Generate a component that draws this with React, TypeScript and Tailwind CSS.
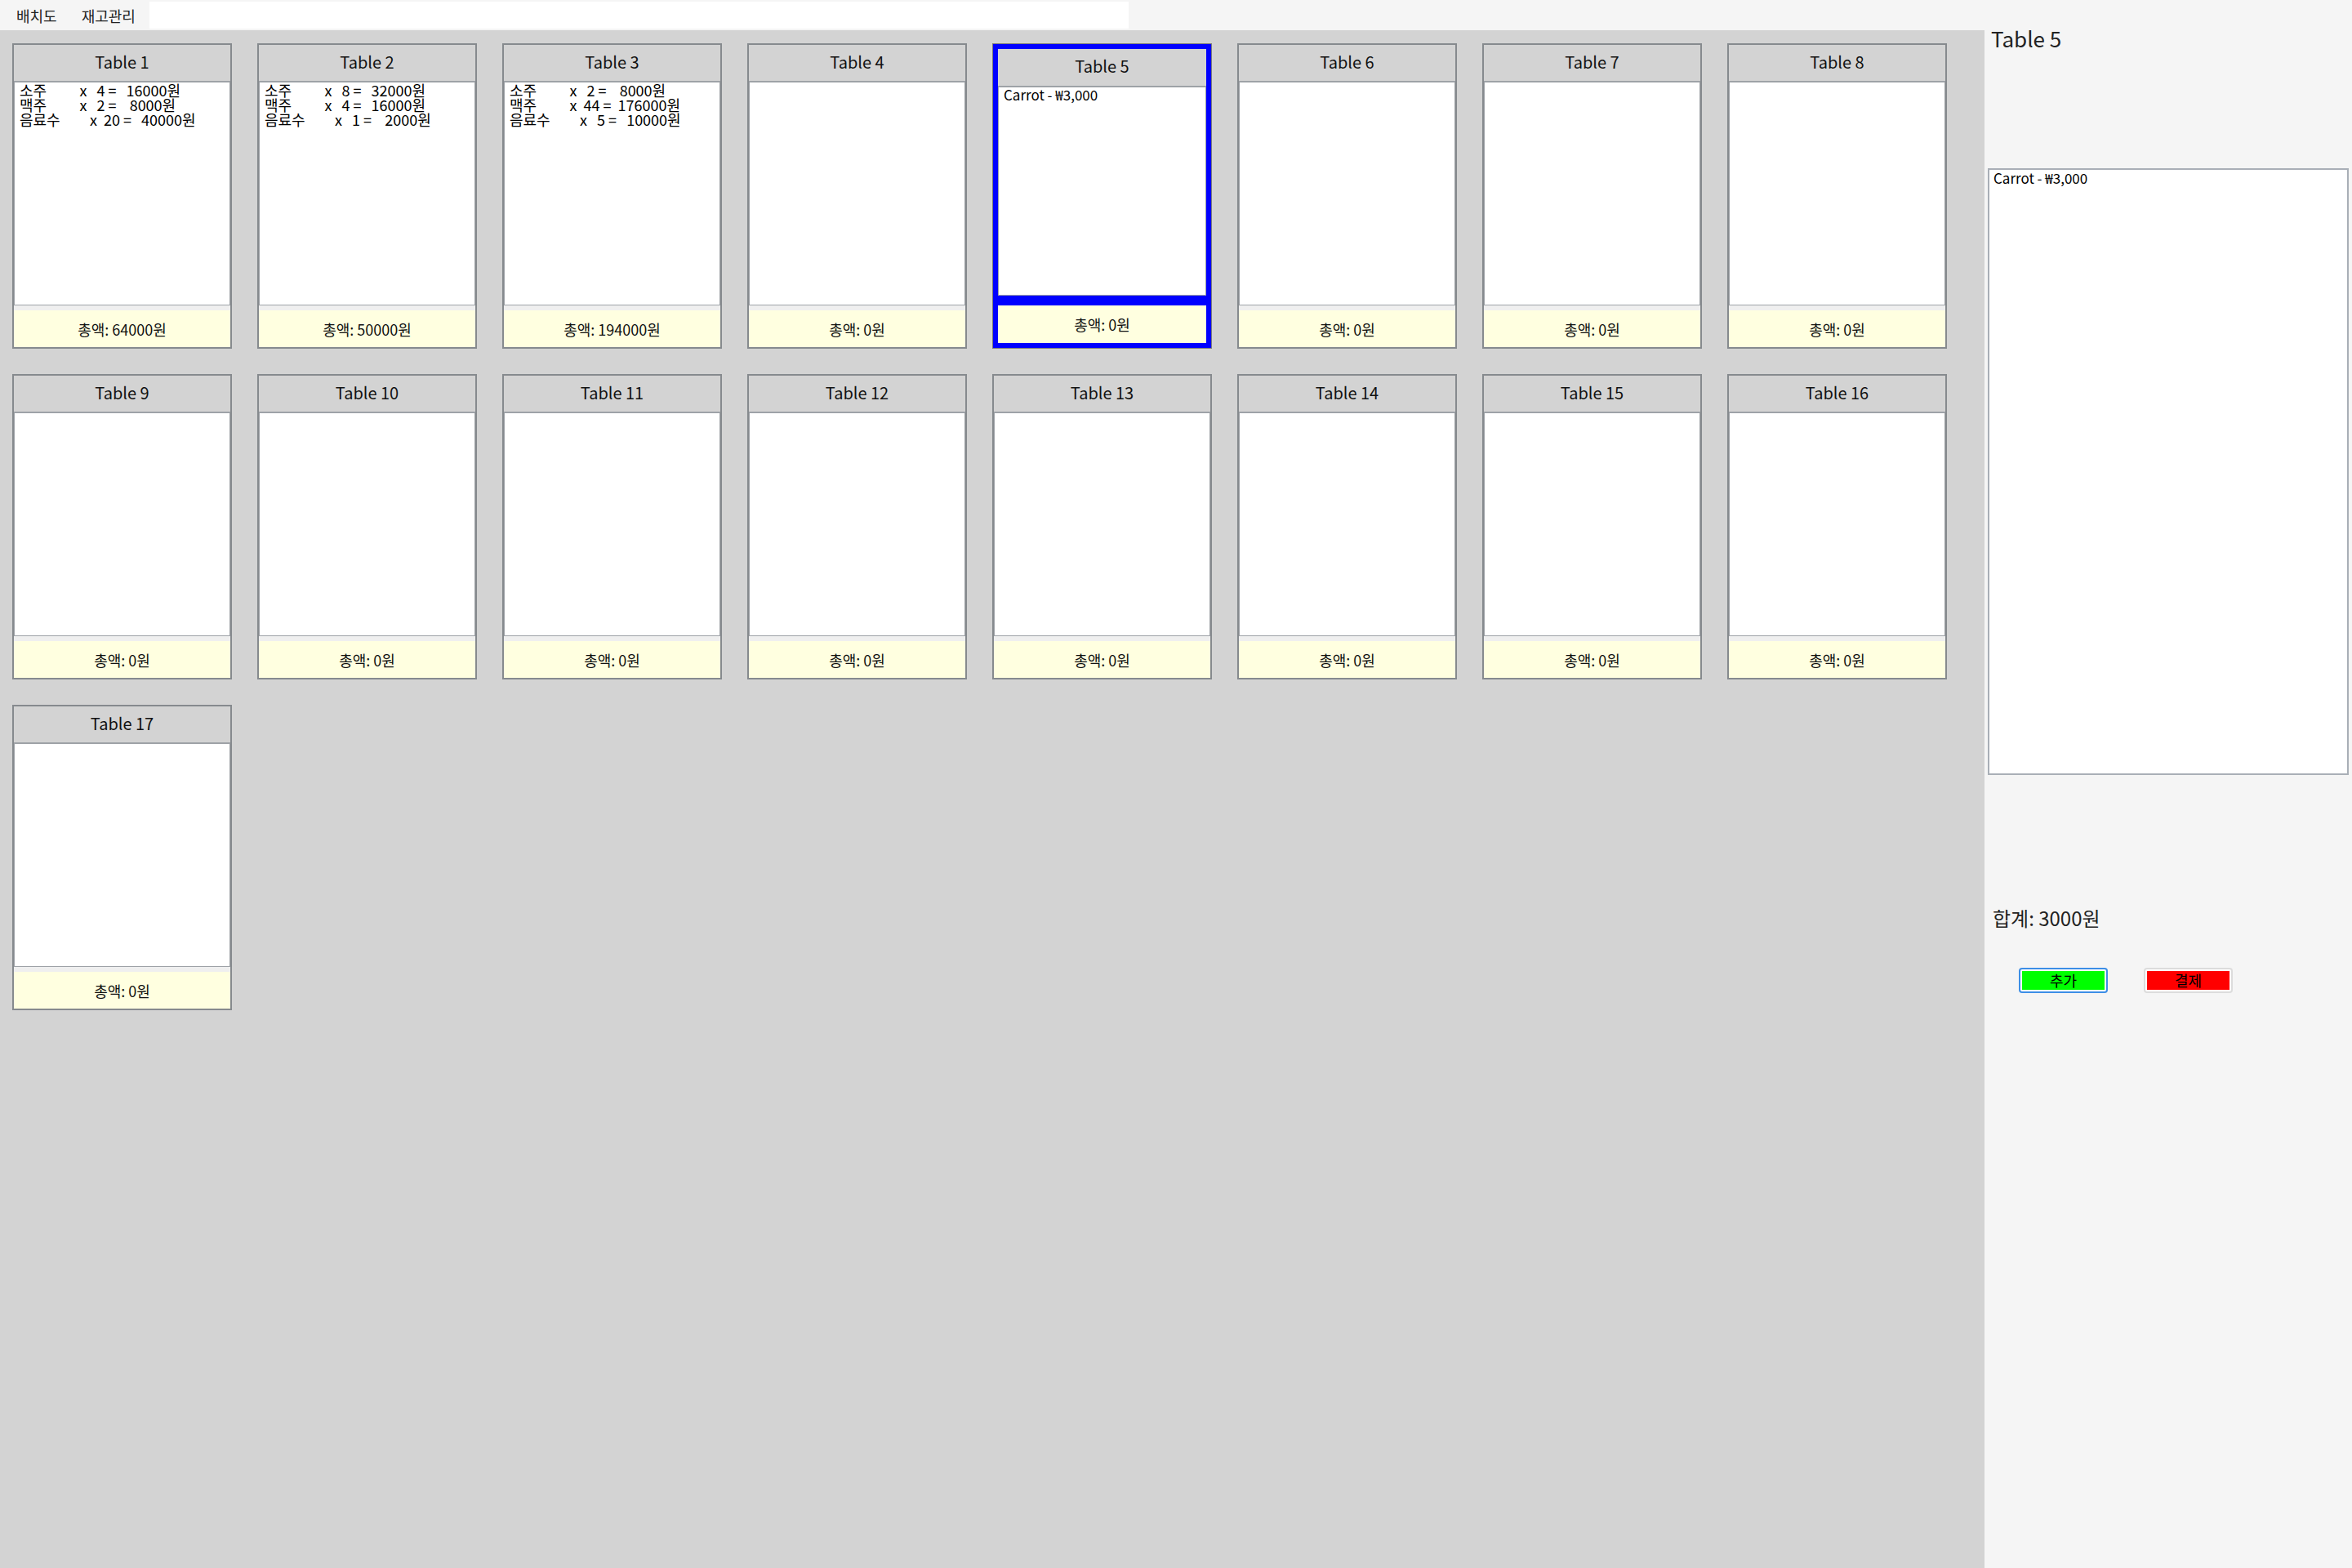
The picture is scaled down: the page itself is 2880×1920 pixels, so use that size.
import React from 'react';

interface OrderLine {
    name: string;
    qty: number;
    amount: number;
}

interface TableData {
    id: number;
    lines: OrderLine[];
    items?: string[];
}

const font = "font-['Noto_Sans_CJK_KR','Noto_Sans',sans-serif]";

const formatLine = (l: OrderLine) =>
    `${l.name.padEnd(12)}x  ${String(l.qty).padStart(2)} =  ${String(l.amount).padStart(6)}원`;

const tables: TableData[] = [
    {
        id: 1,
        lines: [
            { name: '소주', qty: 4, amount: 16000 },
            { name: '맥주', qty: 2, amount: 8000 },
            { name: '음료수', qty: 20, amount: 40000 },
        ],
    },
    {
        id: 2,
        lines: [
            { name: '소주', qty: 8, amount: 32000 },
            { name: '맥주', qty: 4, amount: 16000 },
            { name: '음료수', qty: 1, amount: 2000 },
        ],
    },
    {
        id: 3,
        lines: [
            { name: '소주', qty: 2, amount: 8000 },
            { name: '맥주', qty: 44, amount: 176000 },
            { name: '음료수', qty: 5, amount: 10000 },
        ],
    },
    { id: 4, lines: [] },
    { id: 5, lines: [], items: ['Carrot - ₩3,000'] },
    ...Array.from({ length: 12 }, (_, i) => ({ id: i + 6, lines: [] })),
];

const TableCard: React.FC<{ table: TableData; selected: boolean }> = ({ table, selected }) => {
    const total = table.lines.reduce((s, l) => s + l.amount, 0);
    return (
        <div
            className={
                selected
                    ? 'flex h-[374px] flex-col border border-[#7c7c7c] bg-[#0000ff] p-[6px]'
                    : 'flex h-[374px] flex-col border-2 border-[#868a8e] bg-[#efefef]'
            }
        >
            <div
                className={`flex shrink-0 items-center justify-center bg-[#d3d3d3] pb-[3px] text-[20px] leading-none text-[#111] ${selected ? 'h-[45px]' : 'h-[44px]'}`}
            >
                Table {table.id}
            </div>
            <div className="flex-1 border border-t-2 border-[#9ea2a7] bg-white pl-[6px] text-[18px] leading-[18px] whitespace-pre text-black">
                {table.lines.map((l, i) => (
                    <div key={i}>{formatLine(l)}</div>
                ))}
                {table.items?.map((it, i) => (
                    <div key={i} className="text-[17px]">{it}</div>
                ))}
            </div>
            <div className={selected ? 'h-[12px] shrink-0' : 'h-[6px] shrink-0'} />
            <div
                className={`flex shrink-0 items-center justify-center bg-[#ffffe0] text-[18px] leading-none text-[#111] ${selected ? 'h-[46px]' : 'h-[45px]'}`}
            >
                총액: {total}원
            </div>
        </div>
    );
};

export default function App() {
    const selectedId = 5;
    const selected = tables.find((t) => t.id === selectedId)!;

    return (
        <div className={`flex h-[1920px] w-[2880px] flex-col bg-[#f5f5f5] ${font}`}>
            {/* menu strip */}
            <div className="flex h-[37px] shrink-0 items-center">
                <span className="ml-[20px] text-[18px] leading-none text-[#222]">배치도</span>
                <span className="ml-[30px] text-[18px] leading-none text-[#222]">재고관리</span>
                <div className="ml-[17px] mt-[2px] h-[33px] w-[1199px] self-start bg-white" />
            </div>

            <div className="flex flex-1">
                {/* floor layout */}
                <div className="w-[2430px] bg-[#d3d3d3] pl-[15px] pt-[16px]">
                    <div className="grid grid-cols-[repeat(8,269px)] gap-[31px]">
                        {tables.map((t) => (
                            <TableCard key={t.id} table={t} selected={t.id === selectedId} />
                        ))}
                    </div>
                </div>

                {/* order panel */}
                <div className="flex flex-1 flex-col">
                    <div className="ml-[8px] text-[26px] leading-[20px] text-[#222]">Table {selected.id}</div>
                    <div className="ml-[4px] mt-[149px] h-[743px] w-[442px] border-2 border-[#a9afb7] bg-white pl-[5px] pt-[1px] text-[17px] leading-[18px] text-black">
                        {selected.items?.map((it, i) => (
                            <div key={i}>{it}</div>
                        ))}
                    </div>
                    <div className="ml-[10px] mt-[163px] text-[24px] leading-[24px] text-[#222]">합계: 3000원</div>
                    <div className="ml-[42px] mt-[49px] flex gap-[44px]">
                        <button className="h-[31px] w-[109px] rounded-[4px] border-2 border-[#3d8ee6] bg-white p-[2px]">
                            <span className="block h-full w-full bg-[#00ff00] text-[18px] leading-[23px] text-black">추가</span>
                        </button>
                        <button className="h-[31px] w-[109px] rounded-[4px] border-2 border-[#dcdcdc] bg-white p-[2px]">
                            <span className="block h-full w-full bg-[#ff0000] text-[18px] leading-[23px] text-black">결제</span>
                        </button>
                    </div>
                </div>
            </div>
        </div>
    );
}
